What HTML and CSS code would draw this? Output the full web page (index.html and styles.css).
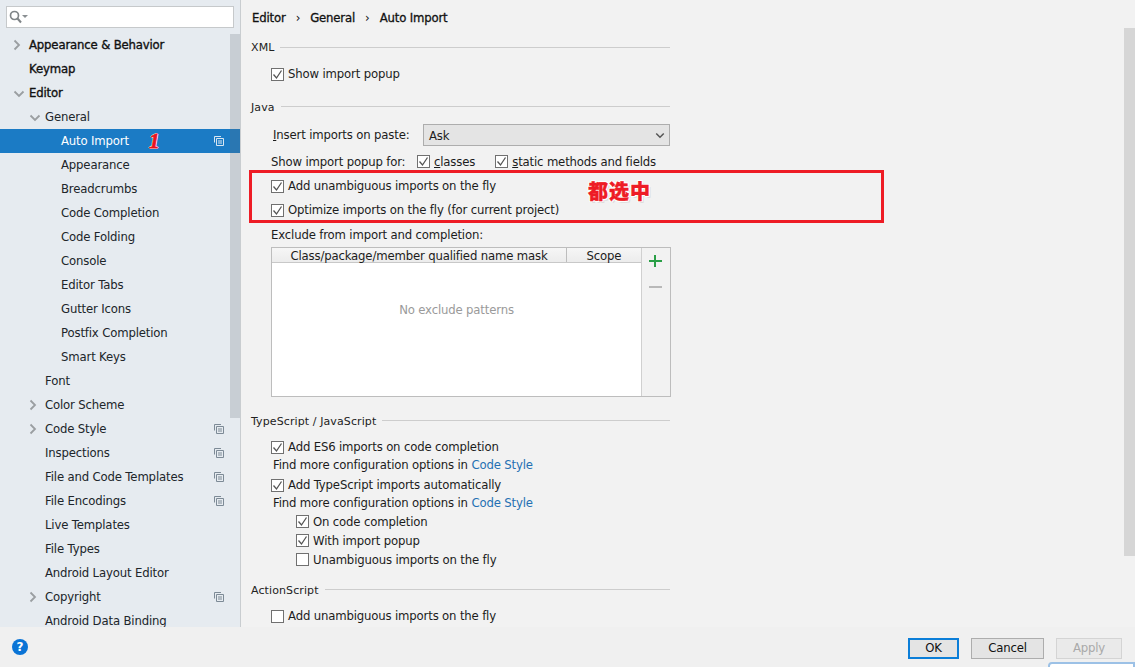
FILE: index.html
```html
<!DOCTYPE html>
<html lang="en">
<head>
<meta charset="utf-8">
<title>Settings - Auto Import</title>
<link rel="stylesheet" href="styles.css">
</head>
<body>
<svg class="defs" width="0" height="0" aria-hidden="true">
  <symbol id="copy" viewBox="0 0 10 10"><path d="M.5 6.500V.5h6.500M2.500 2.500h7v7h-7zM4 5h4M4 7h4" fill="none" stroke="currentColor"/></symbol>
  <symbol id="right" viewBox="0 0 8 12"><path d="M1.500 1.500 6 6l-4.500 4.500" fill="none" stroke="currentColor" stroke-width="1.800"/></symbol>
  <symbol id="down" viewBox="0 0 12 8"><path d="M1.500 1.500 6 6l4.500-4.500" fill="none" stroke="currentColor" stroke-width="1.800"/></symbol>
  <symbol id="tick" viewBox="0 0 13 13"><path d="M2.500 6.500 5.500 10 10.500 2.500" fill="none" stroke="currentColor" stroke-width="1.300"/></symbol>
</svg>
<div class="window">
  <div class="top">
    <aside class="sidebar">
      <div class="search">
        <svg class="search-icon" width="20" height="14" viewBox="0 0 20 14"><circle cx="5.500" cy="5.500" r="4" fill="none" stroke="#7f8487" stroke-width="1.700"/><path d="M8.500 8.500 12 12.500" stroke="#7f8487" stroke-width="2"/><path d="M13 5h6l-3 3z" fill="#8a8f92"/></svg>
      </div>
      <div class="tree-wrap">
        <ul class="tree">
          <li class="node l0 strong"><svg class="arrow"><use href="#right"/></svg>Appearance &amp; Behavior</li>
          <li class="node l0 strong">Keymap</li>
          <li class="node l0 strong"><svg class="arrow wide"><use href="#down"/></svg>Editor</li>
          <li class="node l1"><svg class="arrow wide"><use href="#down"/></svg>General</li>
          <li class="node l2 selected">Auto Import<span class="mark">1</span><svg class="copy"><use href="#copy"/></svg></li>
          <li class="node l2">Appearance</li>
          <li class="node l2">Breadcrumbs</li>
          <li class="node l2">Code Completion</li>
          <li class="node l2">Code Folding</li>
          <li class="node l2">Console</li>
          <li class="node l2">Editor Tabs</li>
          <li class="node l2">Gutter Icons</li>
          <li class="node l2">Postfix Completion</li>
          <li class="node l2">Smart Keys</li>
          <li class="node l1">Font</li>
          <li class="node l1"><svg class="arrow"><use href="#right"/></svg>Color Scheme</li>
          <li class="node l1"><svg class="arrow"><use href="#right"/></svg>Code Style<svg class="copy"><use href="#copy"/></svg></li>
          <li class="node l1">Inspections<svg class="copy"><use href="#copy"/></svg></li>
          <li class="node l1">File and Code Templates<svg class="copy"><use href="#copy"/></svg></li>
          <li class="node l1">File Encodings<svg class="copy"><use href="#copy"/></svg></li>
          <li class="node l1">Live Templates</li>
          <li class="node l1">File Types</li>
          <li class="node l1">Android Layout Editor</li>
          <li class="node l1"><svg class="arrow"><use href="#right"/></svg>Copyright<svg class="copy"><use href="#copy"/></svg></li>
          <li class="node l1">Android Data Binding</li>
        </ul>
        <div class="tree-thumb"></div>
      </div>
    </aside>
    <main class="main">
      <div class="crumbs"><span>Editor</span><span class="sep">›</span><span>General</span><span class="sep">›</span><span>Auto Import</span></div>
      <div class="content">
        <div class="heading first"><span>XML</span></div>
        <label class="check m8"><span class="box on"><svg><use href="#tick"/></svg></span><span class="lbl">Show import popup</span></label>

        <div class="heading m15"><span>Java</span></div>
        <div class="paste-row m9"><span class="paste-label"><u>I</u>nsert imports on paste:</span><div class="combo">Ask<svg class="combo-arrow"><use href="#down"/></svg></div></div>
        <div class="popup-row m5"><span class="popup-label">Show import popup for:</span>
          <label class="check"><span class="box on"><svg><use href="#tick"/></svg></span><span class="lbl"><u>c</u>lasses</span></label>
          <label class="check static"><span class="box on"><svg><use href="#tick"/></svg></span><span class="lbl"><u>s</u>tatic methods and fields</span></label>
        </div>
        <label class="check m5"><span class="box on"><svg><use href="#tick"/></svg></span><span class="lbl">Add unambiguous imports on the fly</span></label>
        <label class="check m4"><span class="box on"><svg><use href="#tick"/></svg></span><span class="lbl">Optimize imports on the fly (for current project)</span></label>
        <div class="plain m7">Exclude from import and completion:</div>
        <div class="table m4">
          <div class="table-body">
            <div class="thead"><div class="th mask">Class/package/member qualified name mask</div><div class="th scope">Scope</div></div>
            <div class="empty">No exclude patterns</div>
          </div>
          <div class="tools"><span class="plus"></span><span class="minus"></span></div>
        </div>

        <div class="heading m16"><span>TypeScript / JavaScript</span></div>
        <label class="check m8"><span class="box on"><svg><use href="#tick"/></svg></span><span class="lbl">Add ES6 imports on code completion</span></label>
        <div class="find">Find more configuration options in <a>Code Style</a></div>
        <label class="check m2"><span class="box on"><svg><use href="#tick"/></svg></span><span class="lbl">Add TypeScript imports automatically</span></label>
        <div class="find">Find more configuration options in <a>Code Style</a></div>
        <div class="sub m1">
          <label class="check"><span class="box on"><svg><use href="#tick"/></svg></span><span class="lbl">On code completion</span></label>
          <label class="check"><span class="box on"><svg><use href="#tick"/></svg></span><span class="lbl">With import popup</span></label>
          <label class="check"><span class="box"></span><span class="lbl">Unambiguous imports on the fly</span></label>
        </div>

        <div class="heading m13"><span>ActionScript</span></div>
        <label class="check m8"><span class="box"></span><span class="lbl">Add unambiguous imports on the fly</span></label>
      </div>
      <div class="main-thumb"></div>
    </main>
  </div>
  <footer class="footer">
    <span class="help">?</span>
    <div class="buttons">
      <button class="btn ok">OK</button>
      <button class="btn cancel">Cancel</button>
      <button class="btn apply">Apply</button>
    </div>
  </footer>
  <div class="callout"></div>
  <div class="sticker">都选中</div>
  <div class="peek"></div>
</div>
</body>
</html>
```
FILE: styles.css
```css
* { box-sizing: border-box; }
html, body { margin: 0; padding: 0; height: 100%; overflow: hidden; }
body { font: 11.7px/16px "DejaVu Sans", sans-serif; letter-spacing: -.16px; color: #1c1c1c; background: #f2f2f2; }
.defs { position: absolute; }
.window { position: relative; width: 1135px; height: 667px; display: flex; flex-direction: column; overflow: hidden; }
.top { display: flex; height: 627px; }

.sidebar { width: 241px; flex: none; background: #e6ebf0; border-right: 1px solid #c9cdd0; display: flex; flex-direction: column; overflow: hidden; }
.search { height: 22px; margin: 6px 6px 5px; width: 228px; background: #fff; border: 1px solid #c6c9cb; padding: 3px 0 0 2px; flex: none; }
.search-icon { display: block; }
.tree-wrap { position: relative; flex: 1; overflow: hidden; }
.tree { list-style: none; margin: 0; padding: 0; }
.node { position: relative; height: 24px; line-height: 24px; white-space: nowrap; color: #20252a; }
.l0 { padding-left: 29px; }
.l1 { padding-left: 45px; }
.l2 { padding-left: 61px; }
.strong { color: #111; -webkit-text-stroke: .35px #111; }
.selected { background: #1b7bc5; color: #fff; }
.arrow { position: absolute; top: 6px; width: 8px; height: 12px; color: #9a9ea1; }
.arrow.wide { width: 12px; height: 8px; top: 9px; }
.l0 .arrow { left: 13px; }
.l1 .arrow { left: 29px; }
.copy { position: absolute; left: 214px; top: 7px; width: 10px; height: 10px; color: #7d8a96; }
.selected .copy { color: #d8e6f2; }
.mark { position: absolute; left: 149px; top: 0; font: 700 italic 21px/24px "Liberation Serif", serif; color: #e8141f; -webkit-text-stroke: .8px #e8141f; text-shadow: 1px 0 #fff, -1px 0 #fff, 0 1px #fff, 0 -1px #fff; }
.tree-thumb { position: absolute; left: 230px; top: 1px; width: 10px; height: 384px; background: rgba(95, 105, 115, .22); }

.main { position: relative; flex: 1; overflow: hidden; }
.crumbs { height: 36px; padding-left: 11px; display: flex; align-items: center; color: #111; -webkit-text-stroke: .3px #111; }
.sep { margin: 0 10px; font-weight: 400; -webkit-text-stroke: 0; }
.content { padding-left: 10px; width: 429px; }
.heading { height: 16px; display: flex; align-items: center; gap: 6px; font-size: 11px; letter-spacing: .1px; color: #222; white-space: nowrap; }
.heading span { position: relative; top: 1px; }
.heading::after { content: ""; flex: 1; height: 1px; margin-top: -2px; background: #cdcdcd; }
.heading.first { margin-top: 4px; }
.heading.first span { top: 0; }
.m1 { margin-top: 1px; } .m2 { margin-top: 2px; } .m4 { margin-top: 4px; }
.m5 { margin-top: 5px; } .m7 { margin-top: 7px; } .m8 { margin-top: 8px; } .m9 { margin-top: 9px; }
.m13 { margin-top: 13px; } .m15 { margin-top: 15px; } .m16 { margin-top: 16px; }
.check { display: flex; align-items: center; height: 20px; padding-left: 20px; white-space: nowrap; }
.box { width: 13px; height: 13px; flex: none; margin-right: 4px; background: #fff; border: 1px solid #707070; color: #555; position: relative; }
.box svg { position: absolute; left: -1px; top: -1px; width: 13px; height: 13px; }
.paste-row { display: flex; align-items: center; height: 22px; padding-left: 22px; }
.paste-label { width: 150px; flex: none; }
.combo { position: relative; width: 247px; height: 22px; background: #e4e4e4; border: 1px solid #adadad; line-height: 22px; padding-left: 5px; }
.combo-arrow { position: absolute; right: 4px; top: 7px; width: 10px; height: 7px; color: #555; }
.popup-row { display: flex; align-items: center; height: 20px; padding-left: 20px; padding-top: 1px; white-space: nowrap; }
.popup-label { width: 146px; flex: none; }
.popup-row .check { padding-left: 0; }
.popup-row .static { margin-left: 20px; }
.plain { height: 16px; padding-left: 20px; white-space: nowrap; }
.table { width: 400px; height: 150px; margin-left: 20px; display: flex; border: 1px solid #bdbdbd; }
.table-body { flex: 1; background: #fff; display: flex; flex-direction: column; border-right: 1px solid #d0d0d0; }
.thead { display: flex; height: 15px; background: linear-gradient(#f6f6f6, #ececec); border-bottom: 1px solid #c8c8c8; }
.th { line-height: 16px; text-align: center; }
.mask { width: 295px; border-right: 1px solid #bdbdbd; }
.scope { flex: 1; }
.empty { flex: 1; display: flex; align-items: center; justify-content: center; color: #9a9a9a; padding-bottom: 40px; }
.tools { width: 28px; flex: none; position: relative; background: #f2f2f2; }
.plus, .minus { position: absolute; left: 7px; width: 13px; height: 2px; }
.plus { top: 12px; background: #2a9f47; }
.plus::after { content: ""; position: absolute; left: 5px; top: -5px; width: 2px; height: 12px; background: #2a9f47; }
.minus { top: 38px; background: #b9b9b9; }
.find { height: 16px; padding-left: 22px; white-space: nowrap; }
.find a { color: #2470b3; }
.sub { padding-left: 25px; }
.sub .check { height: 19px; }
.main-thumb { position: absolute; left: 883px; top: 28px; width: 11px; height: 528px; background: #d6d6d6; }

.footer { height: 40px; flex: none; background: #f0f0f0; display: flex; align-items: center; justify-content: space-between; padding: 0 0 0 12px; }
.help { width: 16px; height: 16px; border-radius: 50%; background: #0a74d6; color: #fff; font: 700 12px/16px "DejaVu Sans", sans-serif; text-align: center; }
.buttons { display: flex; margin-right: 13px; margin-top: 2px; }
.btn { height: 21px; padding: 0; font: 11.7px/16px "DejaVu Sans", sans-serif; letter-spacing: -.16px; color: #111; background: #e4e4e4; border: 1px solid #adadad; }
.ok { width: 51px; border: 2px solid #0b7ed8; margin-right: 12px; }
.cancel { width: 73px; margin-right: 12px; }
.apply { width: 66px; color: #a9a9a9; background: #eaeaea; border-color: #d4d4d4; }

.callout { position: absolute; left: 249px; top: 170px; width: 635px; height: 53px; border: 3px solid #ee1c25; }
.sticker { position: absolute; left: 588px; top: 179px; font: 900 20px/24px "Noto Sans CJK SC", sans-serif; letter-spacing: 1px; color: #ee1c25; -webkit-text-stroke: .4px #ee1c25; text-shadow: 1px 0 #fff, -1px 0 #fff, 0 1px #fff, 0 -1px #fff, 1px 1px #fff, -1px -1px #fff, 1px -1px #fff, -1px 1px #fff, 2px 2px #ddd; }
.peek { position: absolute; left: 1048px; top: 662px; width: 87px; height: 10px; background: #fff; border: 2px solid #9cc1e6; border-radius: 4px 0 0 0; }
```
